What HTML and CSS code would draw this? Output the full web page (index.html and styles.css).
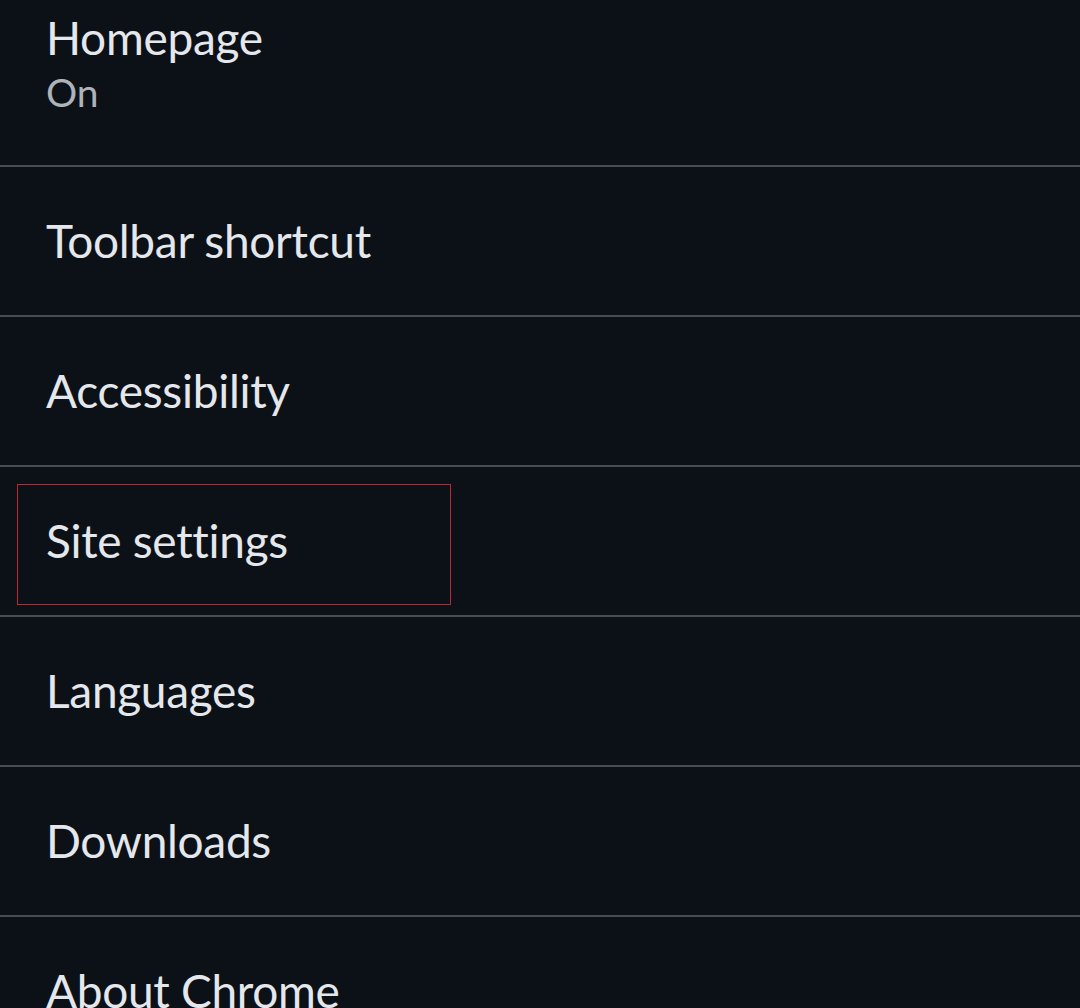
FILE: index.html
```html
<!DOCTYPE html>
<html>
<head>
<meta charset="utf-8">
<link rel="stylesheet" href="styles.css">
</head>
<body>
<div class="list">
  <div class="row row-first">
    <div class="title">Homepage</div>
    <div class="sub">On</div>
  </div>
  <div class="row"><div class="title">Toolbar shortcut</div></div>
  <div class="row"><div class="title">Accessibility</div></div>
  <div class="row">
    <div class="highlight"></div>
    <div class="title">Site settings</div>
  </div>
  <div class="row"><div class="title">Languages</div></div>
  <div class="row"><div class="title">Downloads</div></div>
  <div class="row"><div class="title">About Chrome</div></div>
</div>
</body>
</html>
```
FILE: styles.css
```css
html, body {
  margin: 0;
  padding: 0;
  background: #0c1118;
  overflow: hidden;
}
.list {
  display: flex;
  flex-direction: column;
  width: 1080px;
  height: 1008px;
  overflow: hidden;
  font-family: "Lato", "Noto Sans", sans-serif;
  font-variant-ligatures: none;
}
.row {
  position: relative;
  flex: 0 0 auto;
  height: 148px;
  border-bottom: 2px solid #474d55;
  display: flex;
  flex-direction: column;
  justify-content: center;
  padding-left: 46px;
}
.row-first {
  height: 167px;
  justify-content: flex-start;
  padding-top: 10px;
  box-sizing: border-box;
}
.title {
  font-size: 46px;
  line-height: 56px;
  letter-spacing: -0.3px;
  color: #e4e7eb;
}
.sub {
  font-size: 39px;
  line-height: 52px;
  color: #aeb3b9;
}
.highlight {
  position: absolute;
  left: 17px;
  top: 17px;
  width: 432px;
  height: 119px;
  border: 1px solid #c0262c;
}
```
